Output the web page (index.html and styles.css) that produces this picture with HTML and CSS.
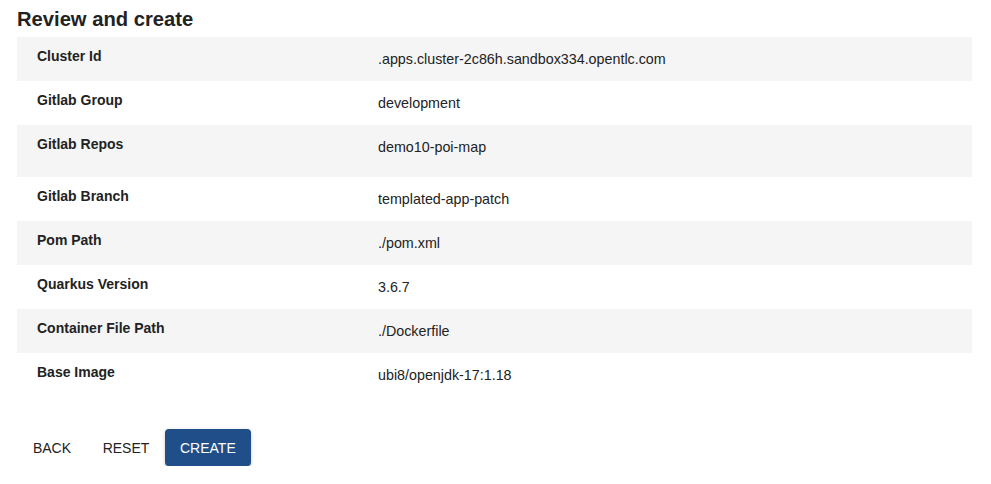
FILE: index.html
```html
<!DOCTYPE html>
<html>
<head>
<meta charset="utf-8">
<link rel="stylesheet" href="styles.css">
</head>
<body>
<div class="page">
  <h2 class="title">Review and create</h2>
  <div class="table">
    <div class="row"><div class="label">Cluster Id</div><div class="value">.apps.cluster-2c86h.sandbox334.opentlc.com</div></div>
    <div class="row"><div class="label">Gitlab Group</div><div class="value">development</div></div>
    <div class="row tall"><div class="label">Gitlab Repos</div><div class="value">demo10-poi-map</div></div>
    <div class="row"><div class="label">Gitlab Branch</div><div class="value">templated-app-patch</div></div>
    <div class="row"><div class="label">Pom Path</div><div class="value">./pom.xml</div></div>
    <div class="row"><div class="label">Quarkus Version</div><div class="value">3.6.7</div></div>
    <div class="row"><div class="label">Container File Path</div><div class="value">./Dockerfile</div></div>
    <div class="row"><div class="label">Base Image</div><div class="value">ubi8/openjdk-17:1.18</div></div>
  </div>
  <div class="actions">
    <button class="btn text">Back</button>
    <button class="btn text">Reset</button>
    <button class="btn primary">Create</button>
  </div>
</div>
</body>
</html>
```

FILE: styles.css
```css
html, body {
  margin: 0;
  padding: 0;
  background: #fff;
  font-family: "Liberation Sans", Arial, sans-serif;
  color: #222;
}
.page {
  padding: 7px 19px 0 17px;
}
.title {
  margin: 0 0 6px 0;
  font-size: 20.2px;
  font-weight: bold;
  line-height: 24px;
  color: #222;
}
.table {
  display: flex;
  flex-direction: column;
}
.row {
  display: grid;
  grid-template-columns: 361px 1fr;
  height: 44px;
}
.row:nth-child(odd) {
  background: #f5f5f5;
}
.row.tall {
  height: 52px;
}
.label {
  padding: 11px 0 0 20px;
  font-size: 14px;
  font-weight: bold;
  line-height: 16px;
}
.value {
  padding: 14px 0 0 0;
  font-size: 14.3px;
  line-height: 16px;
}
.actions {
  display: flex;
  align-items: center;
  gap: 10px;
  padding: 32px 0 0 3px;
}
.btn {
  font-family: "Liberation Sans", Arial, sans-serif;
  font-size: 14px;
  text-transform: uppercase;
  border: none;
  background: none;
  cursor: pointer;
  height: 37px;
  min-width: 64px;
  padding: 0 8px;
  border-radius: 4px;
  color: #222;
}
.btn.primary {
  background: #1f4e89;
  color: #fff;
  padding: 0 15px;
  margin-left: -3px;
  box-shadow: 0 3px 1px -2px rgba(0,0,0,0.2), 0 2px 2px 0 rgba(0,0,0,0.14), 0 1px 5px 0 rgba(0,0,0,0.12);
}
```
